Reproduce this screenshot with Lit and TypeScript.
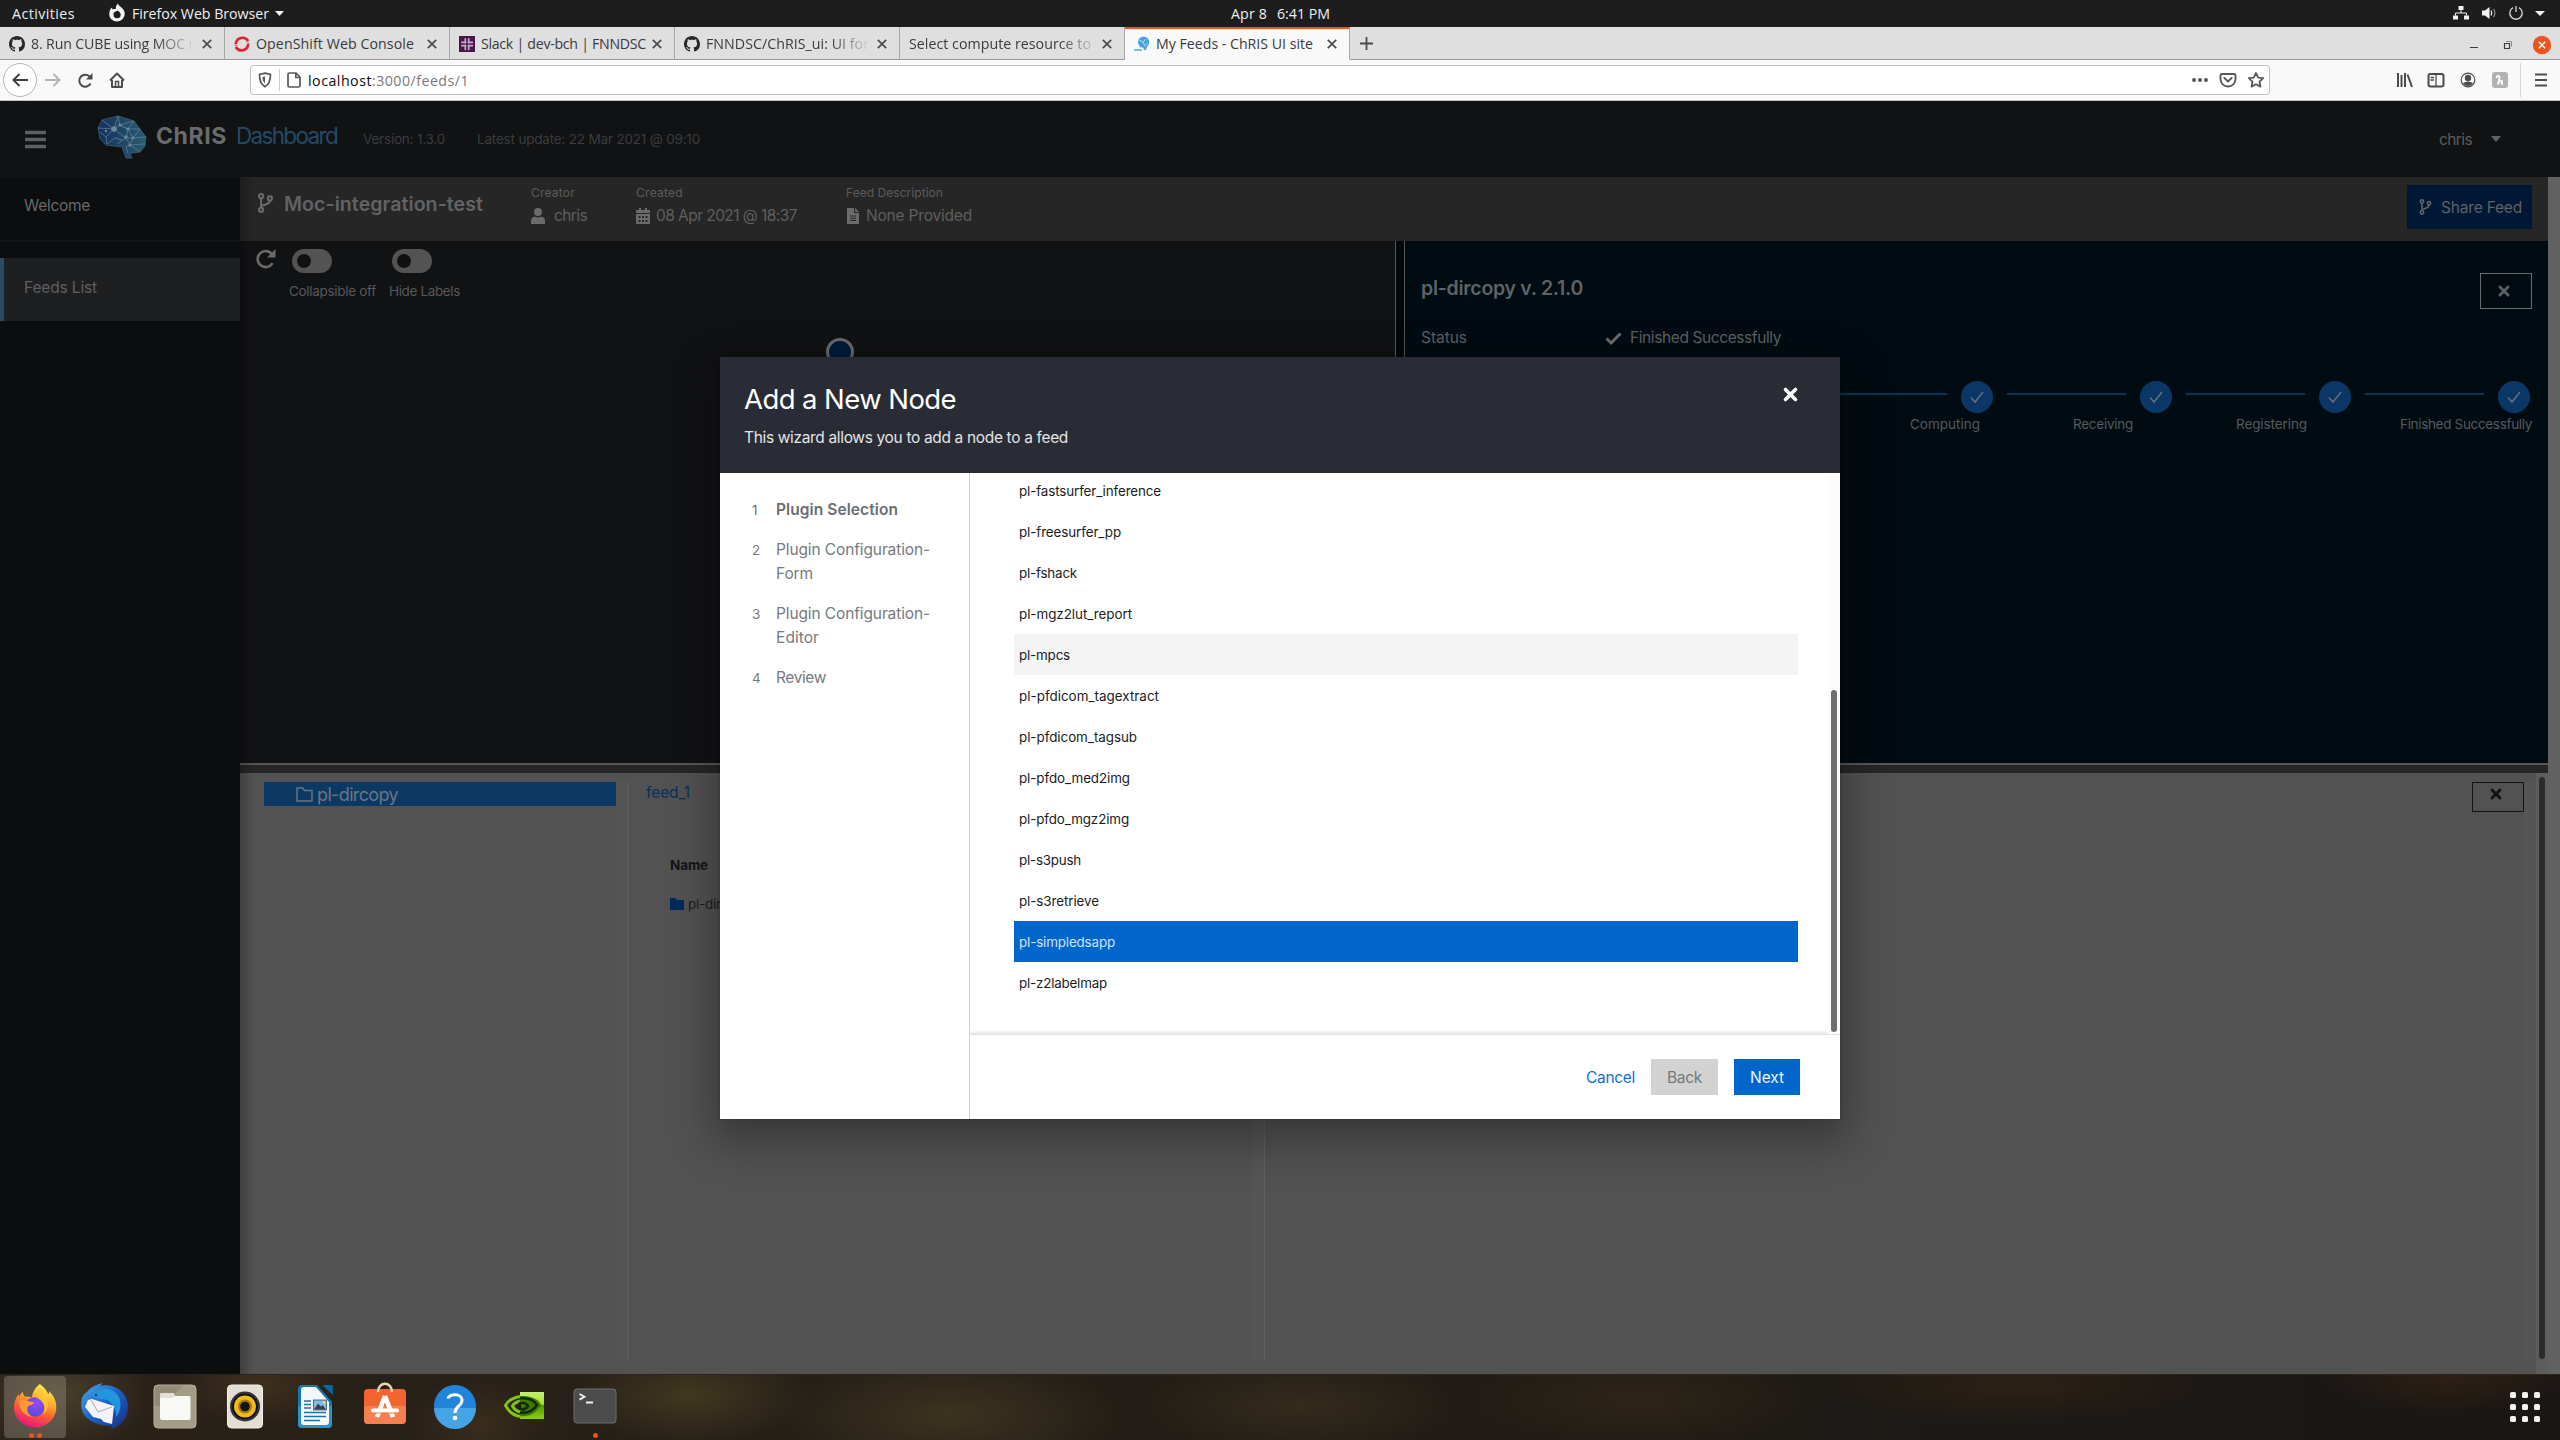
import { LitElement, html, css, svg, nothing } from "lit";
import { customElement, property } from "lit/decorators.js";
import { classMap } from "lit/directives/class-map.js";

/** A single line of text whose tracking is adjusted so that it fills a given width. */
@customElement("fit-text")
class FitText extends LitElement {
  @property({ type: Number }) w = 0;
  @property() text = "";

  static styles = css`
    :host { display: inline-block; white-space: pre; flex: none; text-align: left; }
  `;

  render() {
    return html`<span>${this.text}</span>`;
  }

  updated() {
    const span = this.renderRoot.querySelector("span") as HTMLElement;
    span.style.letterSpacing = "0";
    const natural = span.getBoundingClientRect().width;
    const n = Math.max(1, this.text.length);
    span.style.letterSpacing = `${(this.w - natural) / n}px`;
    this.style.width = `${this.w}px`;
  }
}

const t = (text: string, w: number, cls = "") =>
  html`<fit-text class=${cls} .text=${text} .w=${w}></fit-text>`;

const github = svg`<path fill="#24292e" d="M8 0C3.58 0 0 3.58 0 8c0 3.54 2.29 6.53 5.47 7.59.4.07.55-.17.55-.38 0-.19-.01-.82-.01-1.49-2.01.37-2.53-.49-2.69-.94-.09-.23-.48-.94-.82-1.13-.28-.15-.68-.52-.01-.53.63-.01 1.08.58 1.23.82.72 1.21 1.87.87 2.33.66.07-.52.28-.87.51-1.07-1.78-.2-3.64-.89-3.64-3.95 0-.87.31-1.59.82-2.15-.08-.2-.36-1.02.08-2.12 0 0 .67-.21 2.2.82.64-.18 1.32-.27 2-.27s1.36.09 2 .27c1.53-1.04 2.2-.82 2.2-.82.44 1.1.16 1.92.08 2.12.51.56.82 1.27.82 2.15 0 3.07-1.87 3.75-3.65 3.95.29.25.54.73.54 1.48 0 1.07-.01 1.93-.01 2.2 0 .21.15.46.55.38A8.01 8.01 0 0 0 16 8c0-4.42-3.58-8-8-8z"/>`;
const openshift = svg`<g fill="none" stroke="#dc2434" stroke-width="2.700"><path d="M14.200 5.200A6.600 6.600 0 0 0 2 6.800v3"/><path d="M1.800 11A6.600 6.600 0 0 0 14 9.400v-3"/></g><path stroke="#dfdfdf" stroke-width=".9" d="M0 9.400l4.400-1.600M11.600 8.200l4.400-1.600"/>`;
const slack = svg`<rect width="16" height="16" fill="#4a154b"/><g stroke="#c9a9c9" stroke-width="1.700" stroke-linecap="round"><path d="M6.300 2.800v4M9.700 2.800v4M6.300 9.400v4M9.700 9.400v4M2.800 6.300h4M2.800 9.700h4M9.400 6.300h4M9.400 9.700h4"/></g>`;
const chrisIco = svg`<circle cx="9.600" cy="6.200" r="5.600" fill="#4aa3dc"/><path d="M5 4l4 2 3-3M9 6l2 4 3-3" stroke="#bfe2f6" stroke-width=".8" fill="none"/><path d="M9 11h4l-1 3h-2z" fill="#4aa3dc"/><path d="M0 13h8v2H0z" fill="#7dbce4"/>`;

const TABS: { icon: unknown; label: string; w: number; active?: boolean; fade?: boolean }[] = [
  { icon: github, label: "8. Run CUBE using MOC n", w: 166, fade: true },
  { icon: openshift, label: "OpenShift Web Console", w: 158 },
  { icon: slack, label: "Slack | dev-bch | FNNDSC", w: 165 },
  { icon: github, label: "FNNDSC/ChRIS_ui: UI for", w: 163, fade: true },
  { icon: null, label: "Select compute resource to", w: 182, fade: true },
  { icon: chrisIco, label: "My Feeds - ChRIS UI site", w: 157, active: true },
];

const PLUGINS: [string, number][] = [
  ["pl-fastsurfer_inference", 142],
  ["pl-freesurfer_pp", 102],
  ["pl-fshack", 58],
  ["pl-mgz2lut_report", 113],
  ["pl-mpcs", 51],
  ["pl-pfdicom_tagextract", 140],
  ["pl-pfdicom_tagsub", 118],
  ["pl-pfdo_med2img", 111],
  ["pl-pfdo_mgz2img", 110],
  ["pl-s3push", 62],
  ["pl-s3retrieve", 80],
  ["pl-simpledsapp", 96],
  ["pl-z2labelmap", 88],
];

const STEPS: [string, number][] = [
  ["Computing", 70],
  ["Receiving", 60],
  ["Registering", 71],
  ["Finished Successfully", 132],
];

const branch = (cls: string) => html`<svg class=${cls} viewBox="0 0 16 20">
  <g fill="none" stroke="currentColor" stroke-width="2">
    <circle cx="3.600" cy="3.200" r="2.100"/><circle cx="3.600" cy="16.800" r="2.100"/><circle cx="12.400" cy="5.400" r="2.100"/>
    <path d="M3.600 5.400v9.200M12.400 7.600c0 4-4.500 3.600-8 5.200"/>
  </g></svg>`;

const cross = (cls: string) => html`<svg class=${cls} viewBox="0 0 12 12"><path d="M2 2l8 8M10 2l-8 8" stroke="currentColor" stroke-width="2.900" stroke-linecap="round"/></svg>`;

const dockIcons = [
  svg`<defs>
      <linearGradient id="fx" x1=".75" y1="0" x2=".35" y2="1"><stop offset="0" stop-color="#fff14f"/><stop offset=".35" stop-color="#ffb02e"/><stop offset=".65" stop-color="#ff5a36"/><stop offset="1" stop-color="#e5127d"/></linearGradient>
      <radialGradient id="fp" cx=".6" cy=".3" r=".8"><stop offset="0" stop-color="#9a4bff"/><stop offset="1" stop-color="#4a4ad8"/></radialGradient></defs>
    <path fill="url(#fx)" d="M26.800 0c4 2.500 7 6.500 8.600 10.300c.6-1 .7-2.300.6-3.300C41 12 43.600 17.500 43.300 24 42.700 35 33 43.500 22 43.500S1 34.500 1 23.500c0-5 1.400-9.500 5-13.500-.1 1 0 2 .3 3C7 10.500 8.600 8.800 10 7.800c0 2 .6 3.700 1.600 4.700 2.500-.2 5 .1 7.400 1C19.500 8.500 22 3.500 26.800 0z"/>
    <circle cx="21.500" cy="23" r="9.800" fill="url(#fp)"/>
    <path fill="#ff9a2e" d="M6 17.500c4-2 8-1 11 .2 2.600 0 3.800.5 3.800 1.400-1 2-5.800 2-6.400 4.600-.8 4 2 7.800 6 9-8 .5-14-6-14.400-15.200z"/>
    <path fill="#ffc533" opacity=".8" d="M27 3c1 6 8 9 8 18 0 5-3 8-5 9.500 4-8 0-12.500-5-16C23 11 24 6 27 3z"/>`,
  svg`<defs><linearGradient id="tb" x1="0" y1="0" x2="1" y2="1"><stop offset="0" stop-color="#4aa9e4"/><stop offset=".5" stop-color="#1d5fc4"/><stop offset="1" stop-color="#1a2c7e"/></linearGradient></defs>
    <path fill="url(#tb)" d="M20 -1l-3 3C27-1 45 5 45 23c0 12-9 21-18 22l3-3C12 42-6 34-1 14c1-3 3-5 5-6C8 3 12 1 20-1z"/>
    <path fill="#2196e0" d="M9 11c6-10 22-8 27 2 3 8 1 16-3 20 1-8-5-18-14-18-4 0-7-1-10-4z"/>
    <path fill="#f4f4f6" d="M5 16l4-1 22 7-2 18-8-2-3-3-8-2-8-10z"/>
    <path fill="none" stroke="#9a9a9f" stroke-width=".8" d="M8 16l7 12 14-5"/><circle cx="13" cy="11" r="1" fill="#123"/>`,
  svg`<rect x="1" y="1" width="42" height="43" rx="4" fill="#a39c87"/><path d="M1 5a4 4 0 0 1 4-4h26L8 22H1z" fill="#938b74"/><rect x="1" y="1" width="42" height="43" rx="4" fill="none" stroke="#b5af9e"/><path fill="#f8f8f6" d="M7 11q0-2 2-2h10q2 0 2.500 2l.5 1h14q1.500 0 1.500 1.500V34q0 2-2 2H9q-2 0-2-2z"/><path d="M7 11q0-2 2-2h10q2 0 2.500 2l.5 1-3 2H7z" fill="#e4e0d8"/>`,
  svg`<rect x="4.500" y="1" width="35" height="43" rx="4" fill="#e3dfd5" stroke="#f4f2ec"/><circle cx="22" cy="22.500" r="15" fill="#32333d"/><circle cx="22" cy="22.500" r="12.800" fill="#111"/><circle cx="22" cy="22.500" r="11" fill="#f0b91c"/><circle cx="22" cy="22.500" r="7" fill="#a97c0a"/><circle cx="22" cy="22.500" r="4.800" fill="#151515"/>`,
  svg`<path fill="#1378ad" d="M5 5q0-4 4-4h16l14 16v23q0 4-4 4H9q-4 0-4-4z"/><path fill="#2b93c8" d="M5 22h34v18q0 4-4 4H9q-4 0-4-4z"/><path fill="#f6f7f8" d="M8 6q0-3 3-3h12l13 15v20q0 3-3 3H11q-3 0-3-3z"/><path fill="#0f6699" d="M29 1h9q2 0 2 2v8z"/><path fill="#26241f" d="M24 1l5 0 11 12v6z"/><g stroke="#1378ad" stroke-width="1.600"><path d="M11 17h7M11 20.500h7M11 24h7M11 28.500h22M11 32.500h22M11 36.500h16"/></g><rect x="20.500" y="16" width="13" height="10" fill="#7fbde6" stroke="#31546b" stroke-width=".8"/><path d="M21 25.500l4-6 3 3 1.500-1.500 3.500 4.500z" fill="#3b3f45"/><circle cx="31" cy="18.500" r="1.400" fill="#f7d94c"/>`,
  svg`<rect x="1" y="5" width="42" height="35" rx="4" fill="#f26430"/><path d="M1 22h42v14a4 4 0 0 1-4 4H5a4 4 0 0 1-4-4z" fill="#f47f52"/><path d="M15 8C15-3 29-3 29 8" fill="none" stroke="#ead6b4" stroke-width="2.400"/><path d="M22 12l-8 21M22 12l8 21" stroke="#fff" stroke-width="4.600" fill="none"/><path d="M10 26.500h24" stroke="#fff" stroke-width="4" stroke-linecap="round"/><path d="M11 29h22" stroke="#f47f52" stroke-width="1"/>`,
  svg`<circle cx="22" cy="22" r="21" fill="#2184db"/><path d="M1 24a21 21 0 0 0 42 0z" fill="#45a4e6"/><path d="M15 14.500c1-5 14-5.500 14 1.500 0 6.500-7 6-7 13" fill="none" stroke="#fff" stroke-width="3"/><circle cx="22" cy="34" r="2.300" fill="#fff"/>`,
  svg`<defs><linearGradient id="nv" x1="0" y1="0" x2="0" y2="1"><stop offset="0" stop-color="#c6ef7a"/><stop offset=".45" stop-color="#a4e02c"/><stop offset=".5" stop-color="#4f9a00"/><stop offset="1" stop-color="#8fcf1a"/></linearGradient></defs><path fill="url(#nv)" d="M17 8h24v27H17z"/><path d="M17 12C30 11 37 17 38 21 33 30 25 33 17 32z" fill="#3a7c00"/><g fill="none" stroke="#7fc31c" stroke-width="3"><path d="M17 12.500C9 14 4 18 2.500 21.500 6 28 11 31.500 17 32.500"/><path d="M17 17c-4 1-6.500 3-7.500 5 1.500 3 4 5 7.500 6"/></g><g fill="none" stroke="#16280a" stroke-width="2.400"><path d="M17 14.500c8-1 14 2 17 6.500-4 6-10 8.500-17 7.500"/><path d="M17 19c4-.5 7 1 8 3-2 3-5 4.500-8 2.500z"/></g>`,
  svg`<rect x="1" y="5" width="42" height="34" rx="3" fill="#4b4b4b" stroke="#6e6e6e"/><path d="M6.500 10l5 2.800-5 2.800M13 18.500h7" fill="none" stroke="#f2f2f2" stroke-width="1.800"/>`,
];

@customElement("app-root")
export class AppRoot extends LitElement {
  static styles = css`
    :host {
      display: block; width: 2560px; height: 1440px; overflow: hidden; position: relative;
      font-family: Inter, "Open Sans", sans-serif; font-size: 15.5px; line-height: 24px; color: #676869;
    }
    * { box-sizing: border-box; }
    svg { display: block; flex: none; overflow: visible; }
    .shell { display: grid; grid-template-rows: 27px 33px 41px 1273px 66px; height: 1440px; }
    .row { display: flex; align-items: center; }
    .grow { flex: 1; }
    .os { font-family: "Open Sans", "Noto Sans", sans-serif; font-size: 14.2px; }

    /* desktop panel */
    .panel { background: #1d1d1d; color: #f0f0f0; position: relative; padding: 0 15px 0 12px; }
    .panel .fx { width: 16px; height: 19px; margin: 0 7px 2px 34px; }
    .panel .dn { width: 9px; height: 5px; margin-left: 6px; }
    .clock { position: absolute; left: 1215px; top: 0; height: 27px; padding-left: 16px; gap: 10px; }
    .tray { gap: 12px; margin-top: -1px; }

    /* browser */
    .tabs { background: #dfdfdf; display: flex; border-bottom: 1px solid #9a9a9a; color: #3b3b3e; }
    .tab { width: 225px; height: 33px; border-right: 1px solid #a8a8a8; border-bottom: 1px solid #9a9a9a; padding: 2px 10px 0 9px; gap: 6px; }
    .tab.active { background: #f9f9fa; border-bottom-color: #f9f9fa; border-top: 2px solid #ec5424; padding-top: 0; }
    .tab .ico { width: 16px; height: 16px; }
    .tab .lbl { flex: 1; min-width: 0; overflow: hidden; height: 24px; }
    .tab .fade { -webkit-mask-image: linear-gradient(90deg, #000 125px, transparent 164px); mask-image: linear-gradient(90deg, #000 125px, transparent 164px); }
    .tab .fade.wide { -webkit-mask-image: linear-gradient(90deg, #000 150px, transparent 190px); mask-image: linear-gradient(90deg, #000 150px, transparent 190px); }
    .tab .x { width: 10px; height: 10px; color: #4a4a4c; margin-left: -6px; margin-right: 2px; }
    .plus { width: 15px; height: 15px; margin: 9px 0 0 9px; }
    .win { padding: 2px 9px 0 0; height: 33px; }
    .nav { background: #f9f9fa; border-bottom: 1px solid #c2c2c4; padding-left: 3px; }
    .back { width: 34px; height: 34px; border: 1px solid #b4b4b6; border-radius: 50%; background: #fff; display: grid; place-items: center; }
    .fwd { margin-left: 8px; }
    .rel { margin-left: 17px; }
    .home { margin-left: 16px; }
    .i18 { width: 18px; height: 18px; }
    .url { width: 2020px; height: 30px; margin-left: 125px; border: 1px solid #bdbdbf; border-radius: 4px; background: #fff; padding: 0 5px 0 7px; }
    .url .sep { width: 1px; height: 22px; background: #cfcfd1; margin: 0 7px; }
    .url .host { color: #0c0c0d; margin-left: 7px; }
    .url .path { color: #78787b; }
    .url fit-text { margin-top: 1px; }
    .tools { padding-left: 125px; gap: 14px; color: #4c4c4f; }
    .tools .bar { width: 1px; height: 34px; background: #d8d8da; margin: 0 -3px; }

    /* dashboard */
    .app { background: #0c0d0f; display: grid; grid-template-rows: 76px 1197px; }
    .head { background: #111214; padding-left: 25px; padding-right: 59px; }
    .head .burger { width: 21px; height: 20px; margin-right: 51px; margin-top: -1px; }
    .head .brain { width: 50px; height: 43px; margin: 0 9px 6px 0; }
    .head .name { font-size: 23px; font-weight: 700; color: #6a6b6c; margin: 0 9px 7px 0; }
    .head .dash { font-size: 22.500px; color: #234b66; font-weight: 400; margin: 0 26px 6px 0; }
    .head .small { font-size: 13.500px; color: #3b3c3e; margin-right: 32px; }
    .head .user { color: #5c5d5e; margin-right: 19px; margin-top: 1px; }
    .body { display: grid; grid-template-columns: 240px 2308px 12px; }
    .side { background: #0c0d0f; color: #68696a; }
    .side .w { height: 65px; padding: 0 0 5px 24px; border-bottom: 2px solid #141517; }
    .side .f { height: 63px; margin-top: 16px; background: #1e1f21; border-left: 4px solid #2d4a63; padding: 0 0 4px 20px; color: #5f6061; }
    .scroll { background: #616161; }
    .main { display: grid; grid-template-rows: 64px 522px 10px 601px; background: #525252; position: relative; }
    .main::before { content: ""; position: absolute; z-index: 1; left: 0; top: 0; bottom: 0; width: 14px; background: linear-gradient(90deg, rgba(0,0,0,.22), transparent); }
    .feed { background: #262626; padding: 0 16px 0 17px; display: flex; color: #6b6b6b; }
    .feed .br { width: 17px; height: 20px; margin: 16px 10px 0 0; }
    .feed .title { font-size: 19.500px; font-weight: 600; color: #626364; margin: 15px 48px 0 0; }
    .meta { padding-top: 6px; margin-right: 49px; }
    .meta .k { font-size: 12px; line-height: 20px; color: #5c5c5c; display: block; }
    .meta .v { gap: 6px; height: 24px; margin-top: 1px; color: #5f5f5f; }
    .meta .v.who { gap: 9px; }
    .meta .v.doc { gap: 7px; padding-left: 1px; }
    .meta svg { color: #6b6b6b; height: 16px; }
    .share { width: 125px; height: 44px; margin-top: 8px; background: #001835; color: #5e6265; padding-left: 12px; gap: 9px; }
    .share svg { width: 13px; height: 16px; }
    .share fit-text { margin-top: 1px; }
    .panes { display: grid; grid-template-columns: 1155px 10px 1143px; }
    .graph { background: #111214; position: relative; padding: 8px 0 0 16px; display: flex; }
    .graph .redo { width: 20px; height: 20px; margin-right: 13px; color: #696969; }
    .sw { width: 100px; }
    .toggle { width: 40px; height: 24px; border-radius: 12px; background: #535353; margin: 0 0 6px 3px; padding: 5px; }
    .toggle i { display: block; width: 14px; height: 14px; border-radius: 50%; background: #101113; }
    .sw .cap { font-size: 13.500px; color: #57585a; }
    .node { position: absolute; left: 586px; top: 97px; width: 28px; height: 28px; border-radius: 50%; background: #001b3b; border: 3px solid #696969; }
    .vsplit { background: #02090d; border-left: 1px solid #565656; border-right: 1px solid #565656; }
    .detail { background: #000c12; padding: 32px 16px 0 16px; color: #5b6063; }
    .detail .top { justify-content: space-between; height: 36px; }
    .detail .ttl { font-size: 19.500px; font-weight: 600; color: #5f6365; margin-bottom: 6px; }
    .cbtn { width: 52px; height: 36px; border: 1px solid #696c6e; padding: 11px 0 0 17px; }
    .cbtn svg, .x12 { width: 12px; height: 12px; }
    .stat { margin-top: 17px; }
    .stat .chk { width: 17px; height: 13px; margin: 0 8px 0 138px; color: #6b6b6b; }
    .steps { margin: 31px 2px 0 0; justify-content: flex-end; height: 32px; }
    .steps .line { width: 119px; height: 2px; background: #0a3358; margin: -7px 14px 0; }
    .steps .dot { width: 32px; height: 32px; border-radius: 50%; background: #0a3766; display: grid; place-items: center; color: #65717c; }
    .steps .dot svg { width: 14px; height: 12px; }
    .labels { font-size: 13.500px; color: #525a5e; justify-content: flex-end; margin-top: -1px; }
    .labels .l0, .labels .l2 { margin-right: 93px; }
    .labels .l1 { margin-right: 103px; }
    .hsplit { background: #262626; border-top: 2px solid #575757; }
    .files { background: #525252; display: flex; padding-top: 9px; color: #0c2c50; }
    .files .tree { width: 376px; padding-left: 24px; }
    .tree .sel { height: 24px; background: #0c3864; color: #6a7682; padding: 1px 0 0 32px; gap: 4px; font-size: 18px; }
    .tree .sel svg { width: 17px; height: 15px; margin-top: -1px; }
    .trk { width: 13px; height: 579px; background: #555; border-right: 1px solid #5f5f5f; }
    .list { width: 623px; padding-left: 17px; }
    .list .crumb { height: 20px; padding-top: 2px; color: #08305c; margin-bottom: 51px; }
    .list .th { font-size: 13.500px; font-weight: 700; color: #131416; padding-left: 24px; }
    .list .td { font-size: 13.500px; color: #1b1c1e; padding-left: 24px; margin-top: 15px; gap: 4px; }
    .list .td svg { width: 14px; height: 12px; color: #002b5c; }
    .prev { width: 1259px; display: flex; justify-content: flex-end; }
    .prev .pbtn { width: 52px; height: 30px; border: 1px solid #131313; color: #111; padding: 5px 0 0 17px; }
    .trk2 { width: 12px; height: 579px; background: #555; }
    .trk3 { width: 12px; height: 601px; margin-top: -9px; background: #5d5d5d; padding: 4px 3px; }
    .trk3 i { display: block; height: 582px; border-radius: 3px; background: #2b2b2b; }

    /* wizard */
    .wiz { position: absolute; left: 720px; top: 357px; width: 1120px; height: 762px; background: #fff; box-shadow: 0 0 4px rgba(0,0,0,.25), 0 16px 40px 8px rgba(0,0,0,.3); display: grid; grid-template-rows: 116px 646px; }
    .wh { background: #292c34; color: #fff; padding: 26px 42px 0 24px; display: flex; justify-content: space-between; }
    .wh .h { font-size: 27.500px; line-height: 32px; height: 32px; display: block; margin-bottom: 11px; }
    .wh .d { color: #e3e4e6; display: block; }
    .wh .x { width: 15px; height: 15px; margin-top: 4px; }
    .wb { display: grid; grid-template-columns: 250px 870px; }
    .wn { border-right: 1px solid #d2d2d2; padding: 25px 0 0 31px; color: #767a7e; }
    .st { display: flex; margin-bottom: 16px; }
    .st .n { width: 25px; font-size: 13.500px; padding-left: 1px; }
    .st .ls { display: flex; flex-direction: column; }
    .st.on { color: #6a6e73; font-weight: 600; }
    .st.on .n { font-weight: 400; }
    .wc { display: grid; grid-template-rows: 562px 84px; }
    .sc { display: grid; grid-template-columns: 44px 784px 30px 12px; box-shadow: inset 0 -4px 4px -3px rgba(0,0,0,.14); border-bottom: 1px solid #e4e4e4; overflow: hidden; }
    .items { margin-top: -3px; color: #1b1c1e; font-size: 13.400px; }
    .it { height: 41px; padding-left: 5px; }
    .it.hov { background: #f4f4f4; }
    .it.sel { background: #0066cc; color: #cfe3f7; }
    .sb { background: #fcfcfc; padding: 217px 3px 0; }
    .sb i { display: block; height: 342px; border-radius: 3px; background: #6f6f6f; }
    .wf { padding: 24px 40px 0 0; justify-content: flex-end; align-items: flex-start; }
    .btn { height: 36px; padding-top: 1px; }
    .b1 { color: #1070cf; margin-right: 16px; }
    .b2 { background: #d2d2d2; color: #74787c; padding-left: 16px; width: 67px; margin-right: 16px; }
    .b3 { background: #0066cc; color: #eef5fc; width: 66px; padding-left: 16px; }

    /* dock */
    .dock { display: flex; padding: 1px 18px 0 4px; border-top: 1px solid #2b241a;
      background:
        radial-gradient(ellipse 90px 60px at 60px 20px, rgba(104,92,60,.5), transparent),
        radial-gradient(ellipse 80px 40px at 260px 10px, rgba(92,66,34,.45), transparent),
        radial-gradient(ellipse 70px 50px at 480px 50px, rgba(84,66,34,.4), transparent),
        radial-gradient(ellipse 120px 50px at 690px 20px, rgba(92,80,38,.5), transparent),
        radial-gradient(ellipse 170px 60px at 950px 40px, rgba(84,72,38,.5), transparent),
        radial-gradient(ellipse 160px 50px at 1300px 30px, rgba(70,58,32,.5), transparent),
        radial-gradient(ellipse 180px 50px at 1640px 24px, rgba(64,50,26,.45), transparent),
        radial-gradient(ellipse 200px 40px at 2020px 10px, rgba(66,46,22,.4), transparent),
        radial-gradient(ellipse 130px 40px at 2450px 0px, rgba(64,42,18,.5), transparent),
        linear-gradient(90deg, #2a2219, #241e17 40%, #1c1815 80%, #1a1614); }
    .app-ico { width: 62px; height: 62px; margin-right: 8px; border-radius: 4px; padding: 8px 9px; position: relative; }
    .app-ico svg { width: 44px; height: 44px; }
    .app-ico.cur { background: rgba(160,156,140,.36); }
    .app-ico .pips { position: absolute; bottom: 0; left: 0; width: 62px; display: flex; gap: 3px; justify-content: center; }
    .app-ico .pips i { width: 5px; height: 5px; border-radius: 50%; background: #e95420; }
    .grid9 { display: grid; grid-template-columns: repeat(3, 6px); grid-auto-rows: 6px; gap: 6px; margin: 16px 2px 0 0; height: 30px; }
    .grid9 i { background: #f4f2ef; border-radius: 1.500px; }
  `;

  private renderPanel() {
    return html`<div class="panel row os">
      ${t("Activities", 63)}
      <svg class="fx" viewBox="0 0 16 18"><path fill="#f2f2f2" fill-rule="evenodd" d="M9 0c.4 2 2 2.400 3.600 4.200C15 6 16 8.500 15.700 11 15 15 12 18 8 18S.4 15 .3 11C.2 8 1 5.500 3 4c0 1 .3 1.600.8 2 1-.6 1.800-.6 3-.4C6.500 3.500 7.500 1.500 9 0zM8.500 7c-1.500 1-4 1-4 4a3.600 3.600 0 0 0 7.200.2C11.700 9 10 8 8.500 7z"/></svg>
      ${t("Firefox Web Browser", 137)}
      <svg class="dn" viewBox="0 0 9 5"><path d="M0 0h9L4.500 5z" fill="#f2f2f2"/></svg>
      <div class="clock row">${t("Apr 8", 36)}${t("6:41 PM", 53)}</div>
      <span class="grow"></span>
      <div class="row tray">
        <svg width="16" height="14" viewBox="0 0 16 14"><path fill="#f2f2f2" d="M5.500 0h5v4h-5zM0 9.500h5v4H0zM11 9.500h5v4h-5z"/><path d="M8 4v3M2.500 9.500V7h11v2.500" stroke="#f2f2f2" fill="none"/></svg>
        <svg width="16" height="14" viewBox="0 0 16 14"><path fill="#f2f2f2" d="M1 4.500h3L8.500 1v12L4 9.500H1z"/><path d="M10 4.500q1.600 2.500 0 5" stroke="#f2f2f2" fill="none" stroke-width="1.300"/><path d="M12.500 3q2.800 4 0 8" stroke="#8d8d8d" fill="none" stroke-width="1.300"/></svg>
        <svg width="14" height="14" viewBox="0 0 14 14"><path d="M4 1.600a6.200 6.200 0 1 0 6 0M7 0v6" stroke="#d6d6d6" fill="none" stroke-width="1.300"/></svg>
        <svg width="10" height="5" viewBox="0 0 10 5"><path d="M0 0h10L5 5z" fill="#f2f2f2"/></svg>
      </div>
    </div>`;
  }

  private renderBrowser() {
    return html`<div class="tabs os">
      ${TABS.map((tab) => html`<div class=${classMap({ tab: true, row: true, active: !!tab.active })}>
        ${tab.icon ? html`<svg class="ico" viewBox="0 0 16 16">${tab.icon}</svg>` : nothing}
        <div class=${classMap({ lbl: true, fade: !!tab.fade, wide: !tab.icon })}>${t(tab.label, tab.w)}</div>
        <svg class="x" viewBox="0 0 10 10"><path d="M.8.8l8.400 8.400M9.200.8L.8 9.200" stroke="currentColor" stroke-width="1.700"/></svg>
      </div>`)}
      <svg class="plus" viewBox="0 0 15 15"><path d="M7.500 1v13M1 7.500h13" stroke="#4a4a4c" stroke-width="1.800"/></svg>
      <span class="grow"></span>
      <div class="row win">
        <svg width="77" height="18" viewBox="0 0 77 18">
          <path d="M-4 11.500h8" stroke="#3c3c3c"/>
          <path d="M30.500 7.500h5v5h-5z" fill="none" stroke="#3c3c3c" stroke-width="1.200"/><path d="M32 5.500h5.500v5" fill="none" stroke="#8d8d8d"/>
          <circle cx="68" cy="9" r="9.200" fill="#e95420"/><path d="M64.800 5.800l6.400 6.400M71.200 5.800l-6.400 6.400" stroke="#fff" stroke-width="1.500"/>
        </svg>
      </div>
    </div>
    <div class="nav row os">
      <div class="back"><svg width="16" height="14" viewBox="0 0 16 14"><path d="M16 7H1.500M7.500 1l-6 6 6 6" fill="none" stroke="#3f3f42" stroke-width="2"/></svg></div>
      <svg class="fwd" width="16" height="14" viewBox="0 0 16 14"><path d="M0 7h14.500M8.500 1l6 6-6 6" fill="none" stroke="#b5b5b7" stroke-width="2"/></svg>
      <svg class="rel" width="15" height="15" viewBox="0 0 15 15"><path d="M12.600 10.500A6 6 0 1 1 12 4" fill="none" stroke="#4c4c4f" stroke-width="2"/><path d="M14.500 0v6.500H8z" fill="#4c4c4f"/></svg>
      <svg class="home" width="16" height="16" viewBox="0 0 16 16"><path d="M1 8.500L8 1.500l7 7M3 8v7h10V8" fill="none" stroke="#4c4c4f" stroke-width="2" stroke-linejoin="round"/><path d="M6.500 15V9.500h3V15" fill="none" stroke="#4c4c4f" stroke-width="1.500"/></svg>
      <div class="url row">
        <svg width="14" height="16" viewBox="0 0 14 16"><path d="M7 1.200l5.500 1.300c0 6-1 9.800-5.500 12.200C2.500 12.300 1.500 8.500 1.500 2.500z" fill="none" stroke="#58585b" stroke-width="1.700"/><path d="M7 4.500v7C5 9.500 4.500 7.500 4.500 5z" fill="#58585b"/></svg>
        <span class="sep"></span>
        <svg width="14" height="16" viewBox="0 0 14 16"><path d="M2.500 1h6.500l4 4v8.500q0 1.500-1.500 1.500h-9Q1 15 1 13.500v-11Q1 1 2.500 1zM8.800 1.500V5.500H13" fill="none" stroke="#58585b" stroke-width="1.700"/></svg>
        ${t("localhost", 64, "host")}${t(":3000/feeds/1", 97, "path")}
        <span class="grow"></span>
        <svg width="104" height="18" viewBox="0 0 104 18" fill="none" stroke="#58585b">
          <g fill="#58585b" stroke="none"><circle cx="34" cy="9" r="2"/><circle cx="40" cy="9" r="2"/><circle cx="46" cy="9" r="2"/></g>
          <path d="M62 3h12q1.500 0 1.500 1.500V8a7 7 0 0 1-15 0V4.500Q60.500 3 62 3z" stroke-width="1.900"/><path d="M64.400 7L68 10.400 71.600 7" stroke-width="1.900" stroke-linecap="round"/>
          <path d="M96 2l2.200 4.600 5 .6-3.700 3.400 1 5L96 13.200l-4.500 2.400 1-5-3.700-3.400 5-.6z" stroke-width="1.800" stroke-linejoin="round"/>
        </svg>
      </div>
      <div class="row tools">
        <svg class="i18" viewBox="0 0 18 18"><path d="M3 2v14M6.500 4v12M10 2v14M12.500 3.500L17 16" stroke="currentColor" stroke-width="2" fill="none"/></svg>
        <svg class="i18" viewBox="0 0 18 18"><rect x="1.500" y="3" width="15" height="12.500" rx="2" fill="none" stroke="currentColor" stroke-width="2"/><path d="M9 3v12M3.500 6.500h3.500M3.500 9h3.500" stroke="currentColor" stroke-width="1.300"/></svg>
        <svg class="i18" viewBox="0 0 18 18"><circle cx="9" cy="9" r="6.800" fill="none" stroke="currentColor" stroke-width="1.200"/><circle cx="9" cy="7" r="3.200" fill="currentColor"/><path d="M4 12q5-3 10 0-1.500 3-5 3t-5-3z" fill="currentColor"/></svg>
        <svg class="i18" viewBox="0 0 18 18"><rect x="1" y="1" width="16" height="16" rx="3" fill="#b2b2b4"/><path d="M5.500 7c0-2.500 3-3 3-1 0 2-1 5-1.500 7.500 1-4 4-5 4-3s-1 3 1 2.500" stroke="#fff" stroke-width="1.700" fill="none"/></svg>
        <span class="bar"></span>
        <svg class="i18" viewBox="0 0 18 18"><path d="M3 3.500h12M3 9h12M3 14.500h12" stroke="currentColor" stroke-width="2"/></svg>
      </div>
    </div>`;
  }

  private renderHeader() {
    return html`<div class="head row">
      <svg class="burger" viewBox="0 0 21 20"><path d="M0 3.500h21M0 10.500h21M0 17.500h21" stroke="#5e5f60" stroke-width="3.400"/></svg>
      <svg class="brain" viewBox="0 0 50 43">
        <defs><linearGradient id="br" x1="0" y1="0" x2="1" y2="0"><stop offset="0" stop-color="#16305c"/><stop offset="1" stop-color="#2a5c72"/></linearGradient></defs>
        <path d="M1 13L5 5l16-4 16 5 6 8 6 8-1 9-5 6-8 1-2 1 2 4h-6l-4-11-16-2-6-6z" fill="url(#br)" stroke="#3d5f76" stroke-width=".8"/>
        <path d="M5 5l12 9-16-1M17 14L21 1l2 9 14-4-6 8-8-4M17 14l6-4 8 4 12 0-7 9-5-9-2 9-12-9-8 8 1 7 8-6 7 2M9 22l-6-5M29 23l7 0 13-1M29 23l-9 6M36 23l-3 7 15-1M33 30l-4 2 2 6M33 30l10 7M29 23l4 7" fill="none" stroke="#5c7f92" stroke-width=".8"/>
        <g fill="#6f8a98"><circle cx="17" cy="14" r="2.800"/><circle cx="23" cy="10" r="1.500"/><circle cx="31" cy="14" r="1.500"/><circle cx="29" cy="22" r="1.700"/><circle cx="36" cy="23" r="1.500"/><circle cx="33" cy="30" r="1.500"/><circle cx="9" cy="16" r="1.200"/></g>
      </svg>
      ${t("ChRIS", 71, "name")}${t("Dashboard", 101, "dash")}
      ${t("Version: 1.3.0", 82, "small")}${t("Latest update: 22 Mar 2021 @ 09:10", 223, "small")}
      <span class="grow"></span>
      ${t("chris", 33, "user")}<svg width="10" height="6" viewBox="0 0 10 6"><path d="M0 0h10L5 6z" fill="#616263"/></svg>
    </div>`;
  }

  private renderFeedBar() {
    return html`<div class="feed">
      ${branch("br")}${t("Moc-integration-test", 199, "title")}
      <div class="meta">${t("Creator", 44, "k")}
        <div class="v row who"><svg width="14" viewBox="0 0 14 16"><circle cx="7" cy="4" r="4" fill="currentColor"/><path d="M0 16v-3q0-4 4-4.200 3 1.500 6 0 4 .2 4 4.200v3z" fill="currentColor"/></svg>${t("chris", 33)}</div></div>
      <div class="meta">${t("Created", 47, "k")}
        <div class="v row"><svg width="14" viewBox="0 0 14 16"><path d="M3 0h2v2h4V0h2v2h3v3H0V2h3z" fill="currentColor"/><path fill="currentColor" fill-rule="evenodd" d="M0 6h14v9q0 1-1 1H1q-1 0-1-1zM2.500 8v2h2V8zm3.500 0v2h2V8zm3.500 0v2h2V8zM2.500 12v2h2v-2zM6 12v2h2v-2zm3.500 0v2h2v-2z"/></svg>${t("08 Apr 2021 @ 18:37", 141)}</div></div>
      <div class="meta">${t("Feed Description", 97, "k")}
        <div class="v row doc"><svg width="12" viewBox="0 0 12 16"><path fill="currentColor" fill-rule="evenodd" d="M0 0h7v5h5v11H0zM8 0l4 4H8zM3 7.500v1h6v-1zm0 2.200v1h6v-1zM3 12v1h6v-1z"/></svg>${t("None Provided", 106)}</div></div>
      <span class="grow"></span>
      <div class="share row">${branch("")}${t("Share Feed", 81)}</div>
    </div>`;
  }

  private renderPanes() {
    return html`<div class="panes">
      <div class="graph">
        <svg class="redo" viewBox="0 0 20 20"><path d="M16.500 14.200A8 8 0 1 1 16 5.200" fill="none" stroke="currentColor" stroke-width="2.600"/><path d="M19.500 0v8.500H11z" fill="currentColor"/></svg>
        <div class="sw"><div class="toggle"><i></i></div>${t("Collapsible off", 87, "cap")}</div>
        <div class="sw"><div class="toggle"><i></i></div>${t("Hide Labels", 71, "cap")}</div>
        <div class="node"></div>
      </div>
      <div class="vsplit"></div>
      <div class="detail">
        <div class="top row">${t("pl-dircopy v. 2.1.0", 162, "ttl")}<div class="cbtn">${cross("")}</div></div>
        <div class="stat row">${t("Status", 46)}<svg class="chk" viewBox="0 0 17 13"><path d="M1.500 6.500L6.200 11 15.500 1.500" fill="none" stroke="currentColor" stroke-width="3"/></svg>${t("Finished Successfully", 151)}</div>
        <div class="steps row">
          ${STEPS.map(() => html`<span class="line"></span><span class="dot"><svg viewBox="0 0 14 12"><path d="M1 6.500l4 4.500L13 1" fill="none" stroke="currentColor" stroke-width="1.500"/></svg></span>`)}
        </div>
        <div class="labels row">${STEPS.map(([s, w], i) => t(s, w, "l" + i))}</div>
      </div>
    </div>`;
  }

  private renderFiles() {
    return html`<div class="files">
      <div class="tree"><div class="sel row">
        <svg viewBox="0 0 17 15"><path d="M1 1h5.500l2 2.500H16V14H1z" fill="none" stroke="currentColor" stroke-width="1.400"/></svg>${t("pl-dircopy", 81)}</div></div>
      <div class="trk"></div>
      <div class="list">
        <div class="crumb row">${t("feed_1", 44)}</div>
        <div class="th">${t("Name", 38)}</div>
        <div class="td row"><svg viewBox="0 0 14 12"><path d="M0 0h5.500l1.500 2h7v10H0z" fill="currentColor"/></svg>${t("pl-dircopy", 63)}</div>
      </div>
      <div class="trk"></div>
      <div class="prev"><div class="pbtn">${cross("x12")}</div></div>
      <div class="trk2"></div>
      <div class="trk3"><i></i></div>
    </div>`;
  }

  private renderWizard() {
    const steps: [string, [string, number][]][] = [
      ["1", [["Plugin Selection", 122]]],
      ["2", [["Plugin Configuration-", 154], ["Form", 37]]],
      ["3", [["Plugin Configuration-", 154], ["Editor", 43]]],
      ["4", [["Review", 50]]],
    ];
    return html`<div class="wiz">
      <div class="wh"><div>${t("Add a New Node", 212, "h")}${t("This wizard allows you to add a node to a feed", 324, "d")}</div>${cross("x")}</div>
      <div class="wb">
        <div class="wn">${steps.map(([n, lines], i) => html`<div class=${classMap({ st: true, on: i === 0 })}>
          <span class="n">${n}</span><div class="ls">${lines.map(([l, w]) => t(l, w))}</div></div>`)}</div>
        <div class="wc">
          <div class="sc"><span></span>
            <div class="items">${PLUGINS.map(([p, w]) => html`<div class=${classMap({ it: true, row: true, hov: p === "pl-mpcs", sel: p === "pl-simpledsapp" })}>${t(p, w)}</div>`)}</div>
            <span></span><div class="sb"><i></i></div>
          </div>
          <div class="wf row">
            <div class="btn row b1">${t("Cancel", 49)}</div>
            <div class="btn row b2">${t("Back", 35)}</div>
            <div class="btn row b3">${t("Next", 34)}</div>
          </div>
        </div>
      </div>
    </div>`;
  }

  private renderDock() {
    const pips = [2, 0, 0, 0, 0, 0, 0, 0, 1];
    return html`<div class="dock">
      ${dockIcons.map((ic, i) => html`<div class=${classMap({ "app-ico": true, cur: i === 0 })}>
        <svg viewBox="0 0 44 44">${ic}</svg>
        <div class="pips">${Array.from({ length: pips[i] }, () => html`<i></i>`)}</div>
      </div>`)}
      <span class="grow"></span>
      <div class="grid9">${Array.from({ length: 9 }, () => html`<i></i>`)}</div>
    </div>`;
  }

  render() {
    return html`<div class="shell">
      ${this.renderPanel()}
      ${this.renderBrowser()}
      <div class="app">
        ${this.renderHeader()}
        <div class="body">
          <div class="side"><div class="w row">${t("Welcome", 66)}</div><div class="f row">${t("Feeds List", 73)}</div></div>
          <div class="main">
            ${this.renderFeedBar()}${this.renderPanes()}<div class="hsplit"></div>${this.renderFiles()}
          </div>
          <div class="scroll"></div>
        </div>
      </div>
      ${this.renderDock()}
    </div>
    ${this.renderWizard()}`;
  }
}
